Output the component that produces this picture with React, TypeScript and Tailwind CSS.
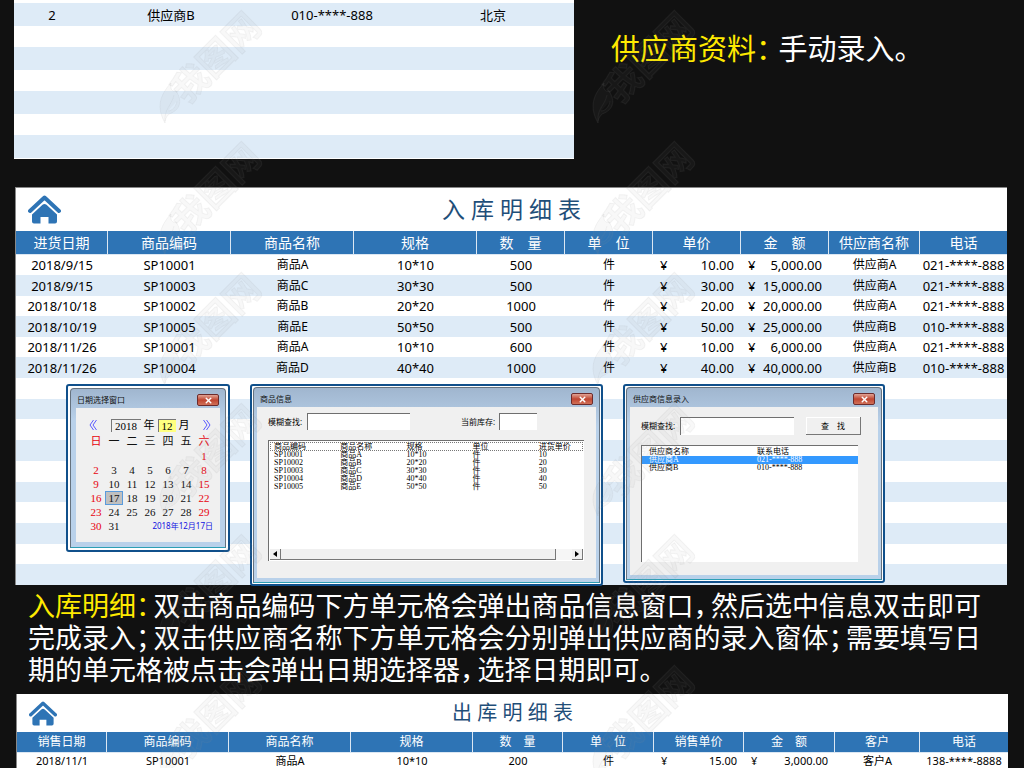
import type { ReactNode } from "react";
import { X } from "lucide-react";

type Column = { label: string; width: number };

const inboundColumns: Column[] = [
  { label: "进货日期", width: 92 },
  { label: "商品编码", width: 123 },
  { label: "商品名称", width: 123 },
  { label: "规格", width: 123 },
  { label: "数　量", width: 88 },
  { label: "单　位", width: 88 },
  { label: "单价", width: 88 },
  { label: "金　额", width: 88 },
  { label: "供应商名称", width: 91 },
  { label: "电话", width: 87 },
];

const inboundRows = [
  ["2018/9/15", "SP10001", "商品A", "10*10", "500", "件", "¥10.00", "¥5,000.00", "供应商A", "021-****-888"],
  ["2018/9/15", "SP10003", "商品C", "30*30", "500", "件", "¥30.00", "¥15,000.00", "供应商A", "021-****-888"],
  ["2018/10/18", "SP10002", "商品B", "20*20", "1000", "件", "¥20.00", "¥20,000.00", "供应商A", "021-****-888"],
  ["2018/10/19", "SP10005", "商品E", "50*50", "500", "件", "¥50.00", "¥25,000.00", "供应商B", "010-****-888"],
  ["2018/11/26", "SP10001", "商品A", "10*10", "600", "件", "¥10.00", "¥6,000.00", "供应商A", "021-****-888"],
  ["2018/11/26", "SP10004", "商品D", "40*40", "1000", "件", "¥40.00", "¥40,000.00", "供应商B", "010-****-888"],
];

const outboundColumns: Column[] = [
  { label: "销售日期", width: 90 },
  { label: "商品编码", width: 122 },
  { label: "商品名称", width: 122 },
  { label: "规格", width: 122 },
  { label: "数　量", width: 90 },
  { label: "单　位", width: 91 },
  { label: "销售单价", width: 90 },
  { label: "金　额", width: 91 },
  { label: "客户", width: 85 },
  { label: "电话", width: 88 },
];

const outboundRows = [
  ["2018/11/1", "SP10001", "商品A", "10*10", "200", "件", "¥15.00", "¥3,000.00", "客户A", "138-****-8888"],
];

const productRows = [
  ["SP10001", "商品A", "10*10", "件", "10"],
  ["SP10002", "商品B", "20*20", "件", "20"],
  ["SP10003", "商品C", "30*30", "件", "30"],
  ["SP10004", "商品D", "40*40", "件", "40"],
  ["SP10005", "商品E", "50*50", "件", "50"],
];

const weekDays = ["日", "一", "二", "三", "四", "五", "六"];
const weeks = [
  ["", "", "", "", "", "", "1"],
  ["2", "3", "4", "5", "6", "7", "8"],
  ["9", "10", "11", "12", "13", "14", "15"],
  ["16", "17", "18", "19", "20", "21", "22"],
  ["23", "24", "25", "26", "27", "28", "29"],
];

const sunken = "border-t border-l border-[#6f6f6f] bg-white outline-none";

function HomeIcon({ className }: { className: string }) {
  return (
    <svg viewBox="0 0 33 29" className={className} aria-hidden="true">
      <path d="M2 16 L16.5 2.5 L31 16" fill="none" stroke="#2e74b5" strokeWidth="4" strokeLinecap="round" strokeLinejoin="round" />
      <path
        d="M14.5 9.8 Q16.5 8.2 18.5 9.8 L29 19.5 V26.5 Q29 28.5 27 28.5 H20.5 V22 H12.5 V28.5 H6 Q4 28.5 4 26.5 V19.5 Z"
        fill="#2e74b5"
      />
    </svg>
  );
}

// Full-width punctuation set on a half-width advance
function Mark({ children }: { children: string }) {
  return <span className="mr-1 [font-feature-settings:'halt']">{children}</span>;
}

function Cell({ value, small }: { value: string; small?: boolean }) {
  if (value.startsWith("¥")) {
    return (
      <td className="p-0">
        <div className="flex justify-between px-[7px]">
          <span>¥</span>
          <span>{value.slice(1)}</span>
        </div>
      </td>
    );
  }
  const chinese = /[\u4e00-\u9fff]/.test(value);
  return <td className={chinese && !small ? "p-0 text-center text-xs/5" : "p-0 text-center"}>{value}</td>;
}

function SheetTable({ columns, rows, small }: { columns: Column[]; rows: string[][]; small?: boolean }) {
  return (
    <table className="w-full table-fixed border-separate border-spacing-0 whitespace-nowrap">
      <colgroup>
        {columns.map((c) => (
          <col key={c.label} style={{ width: c.width }} />
        ))}
      </colgroup>
      <thead className={small ? "text-xs/5" : "text-sm/[23px]"}>
        <tr>
          {columns.map((c) => (
            <th key={c.label} className="border-r border-b border-[#dbe7f3] bg-[#2e74b5] p-0 font-normal text-white last:border-r-0">
              {c.label}
            </th>
          ))}
        </tr>
      </thead>
      <tbody className={small ? "text-[11px]/[15px]" : "text-[13px]/5"}>
        {rows.map((row, i) => (
          <tr key={i} className="even:h-[21px] even:bg-[#deebf7]">
            {row.map((value, j) => (
              <Cell key={j} value={value} small={small} />
            ))}
          </tr>
        ))}
      </tbody>
    </table>
  );
}

function Popup({ title, className, bodyClass, children }: { title: string; className: string; bodyClass: string; children: ReactNode }) {
  return (
    <section className={`shrink-0 rounded-[3px] border-2 border-[#10508b] bg-white text-[8px] ${className}`}>
      <div className="flex h-full flex-col rounded-t border border-b-[#2d9fb5] border-[#66727e] bg-gradient-to-b from-[#a0b6cf] via-[#b9d1ea] via-20% to-[#b9d1ea]">
        <header className="flex h-[19px] shrink-0 items-end justify-between px-1.5 pb-0.5">
          <h3 className="leading-3 text-[#111]">{title}</h3>
          <button
            aria-label="关闭"
            className="flex h-3 w-[22px] items-center justify-center rounded-xs border border-[#6d2b2b] bg-gradient-to-b from-[#e0a294] via-[#bf4531] to-[#d07058] text-white"
          >
            <X size={9} strokeWidth={4} />
          </button>
        </header>
        <div className={`grow bg-[#f0f0f0] ${bodyClass}`}>{children}</div>
      </div>
    </section>
  );
}

function DatePopup() {
  return (
    <Popup title="日期选择窗口" className="h-[168px] w-[164px] p-0.5" bodyClass="mx-[5px] mb-[5px] pt-[9px] pr-[7px] pl-[11px]">
      <div className="flex h-4 items-center justify-between px-0.5 text-[11px]/4">
        <button aria-label="上个月" className="text-[#5a5aff]">
          <svg viewBox="0 0 8 12" className="h-3 w-2" fill="none" stroke="currentColor">
            <path d="M4.5 1 L1 6 L4.5 11 M7.5 1 L4 6 L7.5 11" />
          </svg>
        </button>
        <div className="flex items-center gap-[3px]">
          <input aria-label="年" defaultValue="2018" className="h-[13px] w-[30px] border-t border-l border-[#777] text-center font-['Liberation_Serif',serif] outline-none" />
          <span>年</span>
          <input aria-label="月" defaultValue="12" className="h-[13px] w-[18px] border-t border-l border-[#777] bg-[#ffff80] text-center font-['Liberation_Serif',serif] outline-none" />
          <span>月</span>
        </div>
        <button aria-label="下个月" className="text-[#5a5aff]">
          <svg viewBox="0 0 8 12" className="h-3 w-2" fill="none" stroke="currentColor">
            <path d="M.5 1 L4 6 L.5 11 M3.5 1 L7 6 L3.5 11" />
          </svg>
        </button>
      </div>
      <table className="w-full table-fixed border-collapse text-center text-[11px]/[14px] text-[#111]">
        <thead>
          <tr className="h-4">
            {weekDays.map((d) => (
              <th key={d} className="p-0 font-normal first:text-red-600 last:text-red-600">{d}</th>
            ))}
          </tr>
        </thead>
        <tbody className="font-['Liberation_Serif',serif]">
          {weeks.map((week, i) => (
            <tr key={i} className="h-3.5">
              {week.map((day, j) => (
                <td key={j} className="p-0 first:text-red-600 last:text-red-600">
                  {day === "17" ? (
                    <div className="bg-[#c0c0c0] outline outline-[#5a9bdc] -outline-offset-1">{day}</div>
                  ) : (
                    day
                  )}
                </td>
              ))}
            </tr>
          ))}
          <tr className="h-3.5">
            <td className="p-0 text-red-600">30</td>
            <td className="p-0">31</td>
            <td colSpan={5} className="p-0 text-right font-['Noto_Sans','Noto_Sans_CJK_SC',sans-serif] text-[8px]/3 text-[#1010e0]">
              2018年12月17日
            </td>
          </tr>
        </tbody>
      </table>
    </Popup>
  );
}

function ProductPopup() {
  return (
    <Popup title="商品信息" className="h-[202px] w-[353px] p-px" bodyClass="mx-[3px] mb-1 pt-1.5 pr-3 pl-[11px]">
      <div className="flex items-center">
        <label htmlFor="product-search" className="w-[39px]">模糊查找:</label>
        <input id="product-search" className={`h-[17px] w-[103px] ${sunken}`} />
        <label htmlFor="stock" className="ml-[51px] w-[38px]">当前库存:</label>
        <input id="stock" className={`h-[17px] w-[38px] ${sunken}`} />
      </div>
      <div className="mt-2.5 flex h-[121px] flex-col justify-between border-t border-l border-[#6f6f6f] bg-white p-px">
        <table className="w-full table-fixed border-collapse text-left font-['Liberation_Serif','Noto_Sans_CJK_SC',serif] text-[8px]/[8px] whitespace-nowrap">
          <thead>
            <tr className="outline-1 -outline-offset-1 outline-dotted outline-[#777]">
              {["商品编码", "商品名称", "规格", "单位", "进货单价"].map((h) => (
                <th key={h} className="h-[9px] w-[66px] p-0 pl-1 font-normal last:w-12">{h}</th>
              ))}
            </tr>
          </thead>
          <tbody>
            {productRows.map((row) => (
              <tr key={row[0]}>
                {row.map((v, i) => (
                  <td key={i} className="h-2 p-0 pl-1">{v}</td>
                ))}
              </tr>
            ))}
          </tbody>
        </table>
        <div className="flex h-[11px] bg-[#f6f6f6]">
          <button aria-label="向左滚动" className="flex w-[11px] items-center justify-center border-r border-b border-[#777] bg-[#f0f0f0]">
            <svg viewBox="0 0 4 6" className="h-1.5 w-1"><path d="M4 0 V6 L0 3 Z" /></svg>
          </button>
          <div className="mr-4 grow border-r border-b border-[#777] bg-[#f0f0f0]" />
          <button aria-label="向右滚动" className="flex w-[11px] items-center justify-center border-r border-b border-[#777] bg-[#f0f0f0]">
            <svg viewBox="0 0 4 6" className="h-1.5 w-1"><path d="M0 0 V6 L4 3 Z" /></svg>
          </button>
        </div>
      </div>
    </Popup>
  );
}

function SupplierPopup() {
  return (
    <Popup title="供应商信息录入" className="h-[199px] w-[262px] p-px" bodyClass="mx-[3px] mb-1 pt-2.5 pr-3 pl-[11px]">
      <div className="flex items-center">
        <label htmlFor="supplier-search" className="w-[39px]">模糊查找:</label>
        <input id="supplier-search" className={`h-[18px] w-[114px] ${sunken}`} />
        <button className="ml-3 h-[18px] w-[55px] border-r border-b border-[#777] bg-[#f0f0f0] shadow-[inset_1px_1px_0_#fff]">查　找</button>
      </div>
      <div className="mt-2.5 mr-2 h-[117px] border-t border-l border-[#6f6f6f] bg-white pt-px">
        <table className="w-full table-fixed border-collapse text-left font-['Liberation_Serif','Noto_Sans_CJK_SC',serif] text-[8px]/[8px] whitespace-nowrap">
          <thead>
            <tr>
              <th className="h-[9px] p-0 pl-[7px] font-normal">供应商名称</th>
              <th className="h-[9px] p-0 pl-[7px] font-normal">联系电话</th>
            </tr>
          </thead>
          <tbody>
            <tr className="bg-[#3399ff] text-white">
              <td className="h-2 p-0 pl-[7px]">供应商A</td>
              <td className="h-2 p-0 pl-[7px]">021-****-888</td>
            </tr>
            <tr>
              <td className="h-2 p-0 pl-[7px]">供应商B</td>
              <td className="h-2 p-0 pl-[7px]">010-****-888</td>
            </tr>
          </tbody>
        </table>
      </div>
    </Popup>
  );
}

function Watermark() {
  return (
    <svg className="pointer-events-none absolute inset-0 h-full w-full" aria-hidden="true">
      <defs>
        <pattern id="mark" x="150" y="1" width="433" height="131" patternUnits="userSpaceOnUse">
          <g fill="#888" fillOpacity="0.06" stroke="#888" strokeOpacity="0.09">
            <text x="37" y="104" transform="rotate(-45 37 104)" className="font-['Noto_Sans_CJK_SC',sans-serif] text-[36px] font-bold">
              我图网
            </text>
            <path d="M15 122 C6 106 10 94 21 82 C20 88 22 91 26 90 C34 102 28 110 19 113 C16 116 15 119 15 122 Z M15 120 C14 108 22 104 24 94 M18 110 C22 110 26 106 27 100" />
          </g>
        </pattern>
      </defs>
      <rect width="100%" height="100%" fill="url(#mark)" />
    </svg>
  );
}

export default function App() {
  return (
    <div className="relative min-h-screen bg-[#111] font-['Noto_Sans','Noto_Sans_CJK_SC',sans-serif] text-black">
      <div className="flex pl-3.5">
        <table className="w-[560px] table-fixed border-separate border-spacing-0 border-b border-white bg-white pt-[3px] text-center text-[13px]/5">
          <colgroup>
            <col className="w-[76px]" />
            <col className="w-[162px]" />
            <col className="w-[160px]" />
            <col className="w-[162px]" />
          </colgroup>
          <tbody>
            <tr className="h-[23px] bg-[#deebf7]">
              <td className="p-0">2</td>
              <td className="p-0">供应商B</td>
              <td className="p-0">010-****-888</td>
              <td className="p-0">北京</td>
            </tr>
            {[1, 2, 3, 4, 5, 6].map((n) => (
              <tr key={n} className="h-[21px] odd:h-[23px] odd:bg-[#deebf7]">
                <td colSpan={4} className="p-0" />
              </tr>
            ))}
          </tbody>
        </table>
        <p className="ml-[37px] pt-[29px] text-[29px]/10 whitespace-nowrap text-white">
          <span className="mr-1 text-[#ffea00]">供应商资料<Mark>：</Mark></span>手动录入。
        </p>
      </div>

      <section className="mt-7 mr-[17px] ml-[15px] border-t border-l border-[#888] bg-white">
        <div className="grid h-[43px] grid-cols-[1fr_auto_1fr] items-center">
          <a href="#home" aria-label="首页" className="ml-3 w-[33px]">
            <HomeIcon className="h-[29px] w-[33px]" />
          </a>
          <h2 className="pb-0.5 text-[23px]/8 text-[#1f4e79]">入 库 明 细 表</h2>
        </div>
        <SheetTable columns={inboundColumns} rows={inboundRows} />
        <div className="relative h-[207px]">
          <div className="grid h-full grid-rows-10">
            {Array.from({ length: 10 }, (_, i) => (
              <div key={i} className="even:bg-[#deebf7]" />
            ))}
          </div>
          <div className="absolute top-1.5 left-[50px] flex items-start gap-5">
            <DatePopup />
            <ProductPopup />
            <SupplierPopup />
          </div>
        </div>
      </section>

      <div className="mt-[5px] ml-7 text-[27px]/8 whitespace-nowrap text-white">
        <p>
          <span className="text-[#ffea00]">入库明细<Mark>：</Mark></span>
          双击商品编码下方单元格会弹出商品信息窗口<Mark>，</Mark>然后选中信息双击即可
        </p>
        <p>
          完成录入<Mark>；</Mark>双击供应商名称下方单元格会分别弹出供应商的录入窗体<Mark>；</Mark>需要填写日
        </p>
        <p>
          期的单元格被点击会弹出日期选择器<Mark>，</Mark>选择日期即可。
        </p>
      </div>

      <section className="mt-2 mr-4 ml-4 border-l border-[#888] bg-white">
        <div className="grid h-[38px] grid-cols-[1fr_auto_1fr] items-center">
          <a href="#home" aria-label="首页" className="ml-3 w-7">
            <HomeIcon className="h-[25px] w-7" />
          </a>
          <h2 className="text-xl/7 text-[#1f4e79]">出 库 明 细 表</h2>
        </div>
        <SheetTable columns={outboundColumns} rows={outboundRows} small />
      </section>
      <Watermark />
    </div>
  );
}
